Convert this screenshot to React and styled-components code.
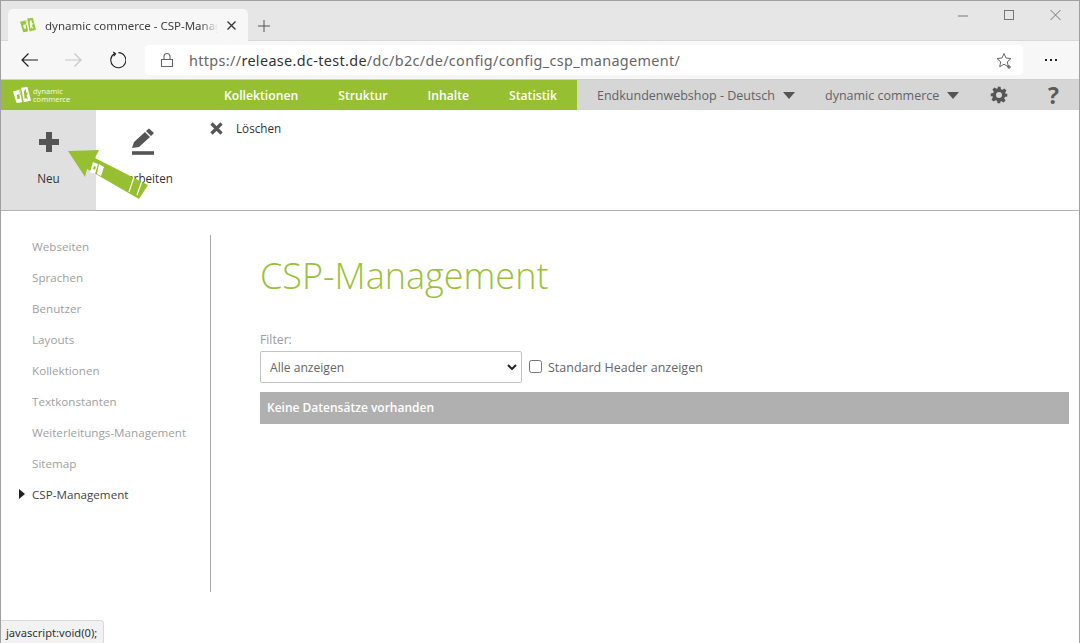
import React from "react";
import styled, { createGlobalStyle } from "styled-components";

const GlobalStyle = createGlobalStyle`
  html, body {
    margin: 0;
    padding: 0;
    background: #ffffff;
  }
  * {
    box-sizing: border-box;
  }
`;

const Window = styled.div`
  position: relative;
  width: 1080px;
  height: 643px;
  overflow: hidden;
  background: #ffffff;
  border: 1px solid #a0a0a0;
  border-bottom: 0;
  font-family: "Open Sans", "Noto Sans", sans-serif;
`;

const TabStrip = styled.div`
  height: 40px;
  display: flex;
  align-items: flex-end;
  padding-left: 7px;
  background: #e6e6e6;
  border-bottom: 1px solid #d8d8d8;
`;

const Tab = styled.div`
  width: 240px;
  height: 32px;
  display: flex;
  align-items: center;
  padding: 0 12px 0 12px;
  background: #f7f7f7;
  border-radius: 5px 5px 0 0;
  margin-bottom: -1px;
`;

const TabTitle = styled.span`
  flex: 1;
  margin: 0 9px;
  overflow: hidden;
  white-space: nowrap;
  font-family: "Noto Sans", sans-serif;
  font-size: 11.5px;
  color: #404040;
  -webkit-mask-image: linear-gradient(to right, #000 90%, transparent);
  mask-image: linear-gradient(to right, #000 90%, transparent);
`;

const NewTab = styled.div`
  display: flex;
  margin: 0 0 8px 10px;
`;

const WindowButtons = styled.div`
  margin-left: auto;
  display: flex;
  gap: 36px;
  align-self: flex-start;
  padding: 8px 18px 0 0;
`;

const ToolBar = styled.div`
  height: 39px;
  display: flex;
  align-items: center;
  background: #f7f7f7;
  border-bottom: 1px solid #d0d0d0;
  padding-left: 20px;
`;

const NavIcons = styled.div`
  display: flex;
  align-items: center;
  gap: 27px;
`;

const AddressBar = styled.div`
  width: 878px;
  height: 30px;
  margin-left: 19px;
  display: flex;
  align-items: center;
  padding: 0 10px 0 15px;
  background: #ffffff;
  border-radius: 4px;
`;

const Url = styled.span`
  margin-left: 15px;
  flex: 1;
  font-family: "Noto Sans", sans-serif;
  font-size: 14.4px;
  letter-spacing: 0.35px;
  color: #666;
  white-space: nowrap;
`;

const Host = styled.span`
  color: #333;
`;

const Dots = styled.div`
  display: flex;
  gap: 3px;
  margin-left: 22px;
`;

const Dot = styled.i`
  width: 2px;
  height: 2px;
  background: #222;
`;

const TopNav = styled.div`
  height: 30px;
  display: flex;
  background: #96c031;
`;

const Brand = styled.div`
  width: 223px;
  display: flex;
  align-items: center;
  padding-left: 12px;
  gap: 2px;
`;

const BrandText = styled.div`
  font-family: "Noto Sans", sans-serif;
  font-size: 7.5px;
  line-height: 8.5px;
  color: #f2f7e2;
`;

const MainLinks = styled.div`
  display: flex;
  align-items: center;
  gap: 40px;
  width: 353px;
`;

const MainLink = styled.span`
  font-size: 12.2px;
  font-weight: 600;
  color: #ffffff;
`;

const UserArea = styled.div`
  flex: 1;
  display: flex;
  align-items: center;
  padding-left: 20px;
  background: #d6d6d6;
`;

const Switcher = styled.div`
  display: flex;
  align-items: center;
  width: ${(props) => props.$width}px;
  font-size: 12.5px;
  color: #5f6368;
  white-space: nowrap;
`;

const Caret = styled.span`
  margin-left: ${(props) => props.$gap}px;
  width: 0;
  height: 0;
  border-left: 6.5px solid transparent;
  border-right: 6.5px solid transparent;
  border-top: 7px solid #555;
`;

const HelpMark = styled.span`
  margin-left: 40px;
  font-size: 23px;
  font-weight: 700;
  line-height: 30px;
  color: #5a5a5a;
`;

const ActionBar = styled.div`
  height: 101px;
  display: flex;
  border-bottom: 1px solid #b4b4b4;
`;

const BigAction = styled.div`
  width: ${(props) => props.$width}px;
  height: 100px;
  display: flex;
  flex-direction: column;
  align-items: center;
  padding-top: 18px;
  background: ${(props) => (props.$active ? "#e0e0e0" : "transparent")};
  font-size: 11.7px;
  color: #333;
`;

const IconBox = styled.div`
  height: 28px;
  display: flex;
  align-items: center;
`;

const BigLabel = styled.span`
  margin-top: 15px;
  line-height: 15px;
`;

const SmallAction = styled.div`
  margin-left: 20px;
  height: 36px;
  display: flex;
  align-items: center;
  gap: 13px;
  font-size: 11.7px;
  color: #333;
`;

const Arrow = styled.svg`
  position: absolute;
  left: 65px;
  top: 147px;
  width: 84px;
  height: 52px;
  overflow: visible;
`;

const Body = styled.div`
  display: flex;
  padding-top: 24px;
`;

const SideNav = styled.nav`
  width: 210px;
  height: 357px;
  border-right: 1px solid #a9a9a9;
  padding: 0 0 0 31px;
`;

const SideItem = styled.div`
  position: relative;
  height: 31px;
  line-height: 23px;
  font-size: 11.65px;
  color: ${(props) => (props.$current ? "#444" : "#a0a0a0")};
  white-space: nowrap;
`;

const CurrentMark = styled.span`
  position: absolute;
  left: -13px;
  top: 6px;
  width: 0;
  height: 0;
  border-top: 5px solid transparent;
  border-bottom: 5px solid transparent;
  border-left: 6px solid #222;
`;

const Content = styled.main`
  flex: 1;
  padding: 18px 10px 0 49px;
`;

const Title = styled.h1`
  margin: 0;
  font-size: 36px;
  line-height: 46px;
  font-weight: 300;
  color: #98c13a;
`;

const FilterLabel = styled.label`
  display: block;
  margin-top: 32px;
  font-size: 12.2px;
  line-height: 17px;
  color: #9a9a9a;
`;

const FilterRow = styled.div`
  display: flex;
  align-items: center;
  margin-top: 3px;
`;

const SelectWrap = styled.div`
  position: relative;
  width: 262px;
  height: 32px;
`;

const Select = styled.select`
  appearance: none;
  width: 100%;
  height: 100%;
  padding-left: 9px;
  background: #ffffff;
  border: 1px solid #c4c4c4;
  border-radius: 2px;
  font-family: "Open Sans", sans-serif;
  font-size: 12.1px;
  color: #666;
`;

const Chevron = styled.svg`
  position: absolute;
  right: 5px;
  top: 13px;
  pointer-events: none;
`;

const CheckLabel = styled.label`
  display: flex;
  align-items: center;
  margin-left: 7px;
  font-size: 12.5px;
  color: #666;
`;

const Check = styled.input`
  width: 13px;
  height: 13px;
  margin: 0 6px 2px 0;
`;

const EmptyRow = styled.div`
  margin-top: 9px;
  height: 32px;
  padding-left: 7px;
  line-height: 32px;
  background: #b0b0b0;
  font-size: 12px;
  font-weight: 600;
  color: #ffffff;
`;

const StatusBar = styled.div`
  position: absolute;
  left: 0;
  bottom: 0;
  height: 23px;
  padding: 0 6px 0 5px;
  line-height: 23px;
  background: #f2f2f2;
  border: 1px solid #d8d8d8;
  border-left: 0;
  border-bottom: 0;
  border-radius: 0 4px 0 0;
  font-family: "Noto Sans", sans-serif;
  font-size: 11.15px;
  color: #333;
`;

const Logo = ({ size, color, mark }) => (
  <svg width={size} height={size} viewBox="0 0 20 20">
    <path d="M0 6l8-2 2 14-6 1z" fill={color} />
    <path d="M9 2l7-1 4 15-8 2z" fill={color} />
    <path d="M4 10l3-1 .6 5-2.600.6zM7 4.500l.8-.2.8 5.700-.8.2z" fill={mark} />
    <path d="M12 6l2-3 1 5 2-1-2 4 2 4-3-2-1 2z" fill={mark} />
  </svg>
);

const ArrowMark = () => (
  <g fill="#ffffff">
    <path d="M27 14l5 2-3 10-5-2z" />
    <path d="M33 16l5 3-3 9-4-2z" />
    <path d="M28 18l2 .8-1 3-2-.8z" fill="#96c031" />
  </g>
);

const sideItems = [
  "Webseiten",
  "Sprachen",
  "Benutzer",
  "Layouts",
  "Kollektionen",
  "Textkonstanten",
  "Weiterleitungs-Management",
  "Sitemap",
];

export default function App() {
  return (
    <>
      <GlobalStyle />
      <Window>
        <TabStrip>
          <Tab>
            <Logo size={16} color="#9ac83c" mark="#f7f7f7" />
            <TabTitle>dynamic commerce - CSP-Management</TabTitle>
            <svg width="9" height="9" viewBox="0 0 9 9">
              <path d="M.5 .5l8 8M8.500 .5l-8 8" stroke="#333" strokeWidth="1.300" />
            </svg>
          </Tab>
          <NewTab>
            <svg width="12" height="12" viewBox="0 0 12 12">
              <path d="M6 0v12M0 6h12" stroke="#555" strokeWidth="1" />
            </svg>
          </NewTab>
          <WindowButtons>
            <svg width="10" height="12" viewBox="0 0 10 12">
              <path d="M0 7h10" stroke="#777" strokeWidth="1" />
            </svg>
            <svg width="10" height="12" viewBox="0 0 10 12">
              <rect x="0.5" y="1.5" width="9" height="9" fill="none" stroke="#777" />
            </svg>
            <svg width="11" height="12" viewBox="0 0 11 12">
              <path d="M0.500 1l10 10M10.500 1l-10 10" stroke="#777" strokeWidth="1" />
            </svg>
          </WindowButtons>
        </TabStrip>
        <ToolBar>
          <NavIcons>
            <svg width="17" height="14" viewBox="0 0 17 14">
              <path d="M17 7H1M7.500 .5L1 7l6.500 6.500" fill="none" stroke="#222" strokeWidth="1.200" />
            </svg>
            <svg width="17" height="14" viewBox="0 0 17 14">
              <path d="M0 7h16M9.500 .5L16 7l-6.500 6.500" fill="none" stroke="#c8c8c8" strokeWidth="1.200" />
            </svg>
            <svg width="17" height="18" viewBox="0 0 18 18">
              <path d="M6 2.200A8 8 0 1 0 10 1.200M4.500 .5L7 2.400 5 5" fill="none" stroke="#222" strokeWidth="1.200" />
            </svg>
          </NavIcons>
          <AddressBar>
            <svg width="14" height="16" viewBox="0 0 14 16">
              <path d="M1.500 7.500h11v7h-11zM4 7.500V4.500a3 3 0 0 1 6 0v3" fill="none" stroke="#666" strokeWidth="1.100" />
            </svg>
            <Url>
              https://<Host>release.dc-test.de</Host>/dc/b2c/de/config/config_csp_management/
            </Url>
            <svg width="17" height="17" viewBox="0 0 17 17">
              <path d="M8 1.500l2 4.500 5 .5-3.700 3.300 1 4.900L8 12.300l-4.300 2.400 1-4.900L1 6.500 6 6z" fill="none" stroke="#666" strokeWidth="1" />
              <path d="M13 13v4M11 15h4" stroke="#555" strokeWidth="1" />
            </svg>
          </AddressBar>
          <Dots>
            <Dot />
            <Dot />
            <Dot />
          </Dots>
        </ToolBar>
        <TopNav>
          <Brand>
            <Logo size={18} color="#ffffff" mark="#96c031" />
            <BrandText>
              dynamic
              <br />
              commerce
            </BrandText>
          </Brand>
          <MainLinks>
            <MainLink>Kollektionen</MainLink>
            <MainLink>Struktur</MainLink>
            <MainLink>Inhalte</MainLink>
            <MainLink>Statistik</MainLink>
          </MainLinks>
          <UserArea>
            <Switcher $width={228}>
              Endkundenwebshop - Deutsch
              <Caret $gap={8} />
            </Switcher>
            <Switcher $width={165}>
              dynamic commerce
              <Caret $gap={8} />
            </Switcher>
            <svg width="18" height="18" viewBox="0 0 24 24">
              <path
                fill="#555"
                fillRule="evenodd"
                d="M10 1h4l.6 3.200 1.900.8 2.700-1.800 2.800 2.800-1.800 2.700.8 1.900L23 10v4l-3.200.6-.8 1.900 1.800 2.700-2.800 2.800-2.700-1.800-1.900.8L14 23h-4l-.6-3.200-1.900-.8-2.700 1.800-2.800-2.800 1.800-2.700-.8-1.900L1 14v-4l3.200-.6.8-1.900-1.800-2.700 2.800-2.800 2.700 1.800 1.900-.8zM12 8a4 4 0 1 0 0 8 4 4 0 0 0 0-8z"
              />
            </svg>
            <HelpMark>?</HelpMark>
          </UserArea>
        </TopNav>
        <ActionBar>
          <BigAction $width={95} $active>
            <IconBox>
              <svg width="20" height="20" viewBox="0 0 20 20">
                <path d="M7 0h6v7h7v6h-7v7H7v-7H0V7h7z" fill="#555" />
              </svg>
            </IconBox>
            <BigLabel>Neu</BigLabel>
          </BigAction>
          <BigAction $width={94}>
            <IconBox>
              <svg width="24" height="28" viewBox="0 0 24 28">
                <path d="M1 25h22" stroke="#555" strokeWidth="3.600" />
                <path d="M1 20l2-6L14 4l5 5L8 19zM15 3l3-2.500 5 4.500-3 3z" fill="#555" />
              </svg>
            </IconBox>
            <BigLabel>Bearbeiten</BigLabel>
          </BigAction>
          <SmallAction>
            <svg width="13" height="13" viewBox="0 0 13 13">
              <path d="M1.500 1.500l10 10M11.500 1.500l-10 10" stroke="#555" strokeWidth="3.200" />
            </svg>
            Löschen
          </SmallAction>
        </ActionBar>
        <Body>
          <SideNav>
            {sideItems.map((item) => (
              <SideItem key={item}>{item}</SideItem>
            ))}
            <SideItem $current>
              <CurrentMark />
              CSP-Management
            </SideItem>
          </SideNav>
          <Content>
            <Title>CSP-Management</Title>
            <FilterLabel>Filter:</FilterLabel>
            <FilterRow>
              <SelectWrap>
                <Select defaultValue="all">
                  <option value="all">Alle anzeigen</option>
                </Select>
                <Chevron width="10" height="6" viewBox="0 0 10 6">
                  <path d="M1 1l4 4 4-4" fill="none" stroke="#222" strokeWidth="2" />
                </Chevron>
              </SelectWrap>
              <CheckLabel>
                <Check type="checkbox" />
                Standard Header anzeigen
              </CheckLabel>
            </FilterRow>
            <EmptyRow>Keine Datensätze vorhanden</EmptyRow>
          </Content>
        </Body>
        <Arrow viewBox="0 0 84 52">
          <path d="M2 3L33 2 29 10 82 37 73 51 21 21 19 29z" fill="#96c031" />
          <path d="M68 29l-5 15M76 33l-5 14" stroke="#ffffff" strokeWidth="1.200" />
          <ArrowMark />
        </Arrow>
        <StatusBar>javascript:void(0);</StatusBar>
      </Window>
    </>
  );
}
